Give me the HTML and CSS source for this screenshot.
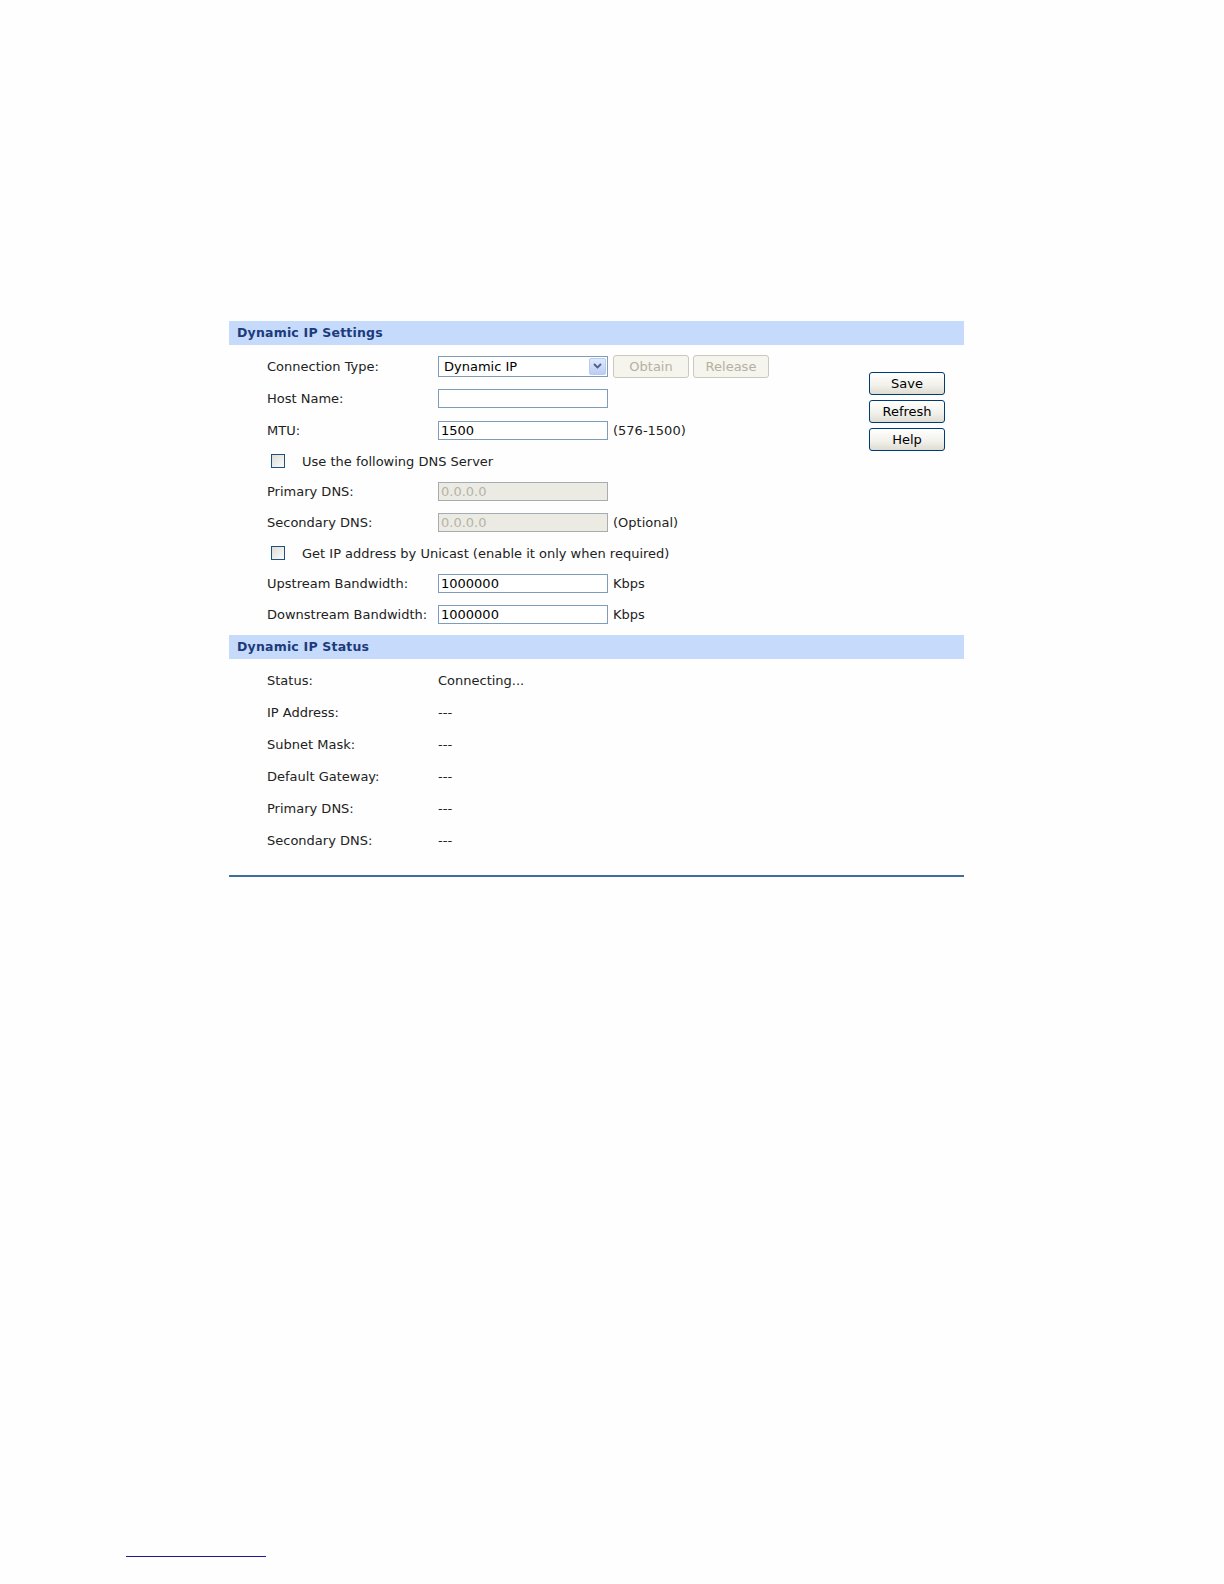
FILE: index.html
```html
<!DOCTYPE html>
<html>
<head>
<meta charset="utf-8">
<link rel="stylesheet" href="styles.css">
</head>
<body>
<div class="page">
  <div class="panel">
    <div class="section-head">Dynamic IP Settings</div>
    <div class="settings">
      <div class="form">
        <div class="row r32">
          <span class="label">Connection Type:</span>
          <div class="select">
            <span class="select-text">Dynamic IP</span>
            <span class="select-btn">
              <svg width="9" height="6" viewBox="0 0 9 6"><path d="M1 1 L4.5 4.5 L8 1" fill="none" stroke="#4d6185" stroke-width="1.8"/></svg>
            </span>
          </div>
          <button class="btn-dis">Obtain</button>
          <button class="btn-dis">Release</button>
        </div>
        <div class="row r32">
          <span class="label">Host Name:</span>
          <div class="input"></div>
        </div>
        <div class="row r32">
          <span class="label">MTU:</span>
          <div class="input">1500</div>
          <span class="note">(576-1500)</span>
        </div>
        <div class="row r30 cbrow">
          <span class="checkbox"></span>
          <span class="cbtext">Use the following DNS Server</span>
        </div>
        <div class="row r30">
          <span class="label">Primary DNS:</span>
          <div class="input disabled">0.0.0.0</div>
        </div>
        <div class="row r32">
          <span class="label">Secondary DNS:</span>
          <div class="input disabled">0.0.0.0</div>
          <span class="note">(Optional)</span>
        </div>
        <div class="row r30 cbrow">
          <span class="checkbox"></span>
          <span class="cbtext">Get IP address by Unicast (enable it only when required)</span>
        </div>
        <div class="row r30">
          <span class="label">Upstream Bandwidth:</span>
          <div class="input">1000000</div>
          <span class="note">Kbps</span>
        </div>
        <div class="row r32">
          <span class="label">Downstream Bandwidth:</span>
          <div class="input">1000000</div>
          <span class="note">Kbps</span>
        </div>
      </div>
      <div class="actions">
        <button class="btn">Save</button>
        <button class="btn">Refresh</button>
        <button class="btn">Help</button>
      </div>
    </div>
    <div class="section-head">Dynamic IP Status</div>
    <div class="status">
      <div class="row r32"><span class="label">Status:</span><span class="value">Connecting...</span></div>
      <div class="row r32"><span class="label">IP Address:</span><span class="value">---</span></div>
      <div class="row r32"><span class="label">Subnet Mask:</span><span class="value">---</span></div>
      <div class="row r32"><span class="label">Default Gateway:</span><span class="value">---</span></div>
      <div class="row r32"><span class="label">Primary DNS:</span><span class="value">---</span></div>
      <div class="row r32"><span class="label">Secondary DNS:</span><span class="value">---</span></div>
    </div>
  </div>
  <div class="footnote"></div>
</div>
</body>
</html>
```

FILE: styles.css
```css
html, body {
  margin: 0;
  padding: 0;
  background: #fefefe;
}
body {
  font-family: "DejaVu Sans", Verdana, sans-serif;
  font-size: 13px;
  color: #222;
}
.page {
  padding-top: 321px;
}
.panel {
  margin-left: 229px;
  width: 735px;
  border-bottom: 2px solid #3f6f99;
  padding-bottom: 19px;
}
.section-head {
  height: 24px;
  line-height: 24px;
  background: #c6dafb;
  color: #1d3b7c;
  font-weight: bold;
  font-size: 12.5px;
  letter-spacing: 0.2px;
  padding-left: 8px;
}
.settings {
  display: flex;
  padding: 5px 0 5px 0;
}
.form {
  width: 640px;
}
.row {
  display: flex;
  align-items: center;
  padding-left: 38px;
}
.r32 { height: 32px; }
.r30 { height: 30px; }
.label {
  width: 171px;
  flex: none;
}
.input {
  width: 170px;
  height: 19px;
  box-sizing: border-box;
  border: 1px solid #7f9db9;
  background: #fff;
  padding-left: 2px;
  line-height: 17px;
  color: #000;
}
.input.disabled {
  background: #ebebe4;
  border-color: #a5acb2;
  color: #b5b3a8;
}
.note {
  margin-left: 5px;
}
.select {
  width: 170px;
  height: 21px;
  box-sizing: border-box;
  border: 1px solid #7f9db9;
  background: #fff;
  display: flex;
  align-items: center;
  justify-content: space-between;
  padding: 1px;
}
.select-text {
  padding-left: 4px;
  color: #000;
}
.select-btn {
  width: 17px;
  height: 17px;
  box-sizing: border-box;
  background: linear-gradient(#dfe8fc, #bccdf4);
  border: 1px solid #b9cbf2;
  border-radius: 2px;
  display: flex;
  align-items: center;
  justify-content: center;
}
.btn-dis {
  font-family: inherit;
  font-size: 13px;
  width: 76px;
  height: 23px;
  margin-left: 5px;
  background: #f5f4ed;
  border: 1px solid #cbc9bd;
  border-radius: 3px;
  color: #b4b1a3;
  padding: 0;
}
.btn-dis + .btn-dis {
  margin-left: 4px;
}
.cbrow {
  padding-left: 42px;
}
.checkbox {
  width: 14px;
  height: 14px;
  box-sizing: border-box;
  border: 1px solid #1c5180;
  background: linear-gradient(135deg, #dcdcd7, #fbfbf9);
  flex: none;
}
.cbtext {
  margin-left: 17px;
}
.actions {
  display: flex;
  flex-direction: column;
  gap: 5px;
  padding-top: 22px;
}
.btn {
  font-family: inherit;
  font-size: 13px;
  width: 76px;
  height: 23px;
  background: linear-gradient(#ffffff, #f1f0ea 60%, #dedcd2);
  border: 1px solid #003c74;
  border-radius: 3px;
  color: #000;
  padding: 0;
}
.status {
  padding-top: 5px;
}
.value {
  color: #222;
}
.footnote {
  margin-top: 679px;
  margin-left: 126px;
  width: 140px;
  height: 0;
  border-top: 1px solid #1a1a9a;
}
```
